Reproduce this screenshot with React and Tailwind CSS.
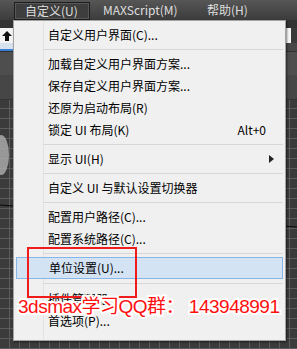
import React from 'react';

const FONT = { fontFamily: '"Noto Sans CJK SC", "Noto Sans", sans-serif' };

const menuRows = [
  { label: '自定义用户界面(C)...' },
  { sep: true },
  { label: '加载自定义用户界面方案...' },
  { label: '保存自定义用户界面方案...' },
  { label: '还原为启动布局(R)' },
  { label: '锁定 UI 布局(K)', shortcut: 'Alt+0' },
  { sep: true },
  { label: '显示 UI(H)', submenu: true },
  { sep: true },
  { label: '自定义 UI 与默认设置切换器' },
  { sep: true },
  { label: '配置用户路径(C)...' },
  { label: '配置系统路径(C)...' },
  { sep: true },
  { label: '单位设置(U)...', active: true },
  { sep: true, tall: true },
  { label: '插件管理器' },
  { label: '首选项(P)...' },
];

const MenuBar = () => (
  <div className="flex h-[20px] items-start bg-linear-to-b from-[#565656] to-[#3c3c3c] text-[12px] text-[#dedede]">
    <div className="ml-[14px] mt-[2px] flex h-[18px] w-[76px] items-center border border-[#1e1e1e] bg-[#3e3e3e] pl-[10px] shadow-[inset_0_0_0_1px_#585858]">
      自定义(U)
    </div>
    <div className="ml-[13px] flex h-[20px] w-[104px] items-center">MAXScript(M)</div>
    <div className="flex h-[20px] items-center">帮助(H)</div>
  </div>
);

const Viewport = () => (
  <div className="flex flex-col">
    <div className="h-[8px] bg-[#333333]" />
    <div className="flex h-[15px] bg-[#3a3a3a]">
      <div className="flex w-[13px] items-center justify-center bg-[#f4f4f4]">
        <svg width="10" height="10" viewBox="0 0 10 10">
          <polygon points="5,0 10,5 7,5 7,10 3,10 3,5 0,5" fill="#111" />
        </svg>
      </div>
      <div className="flex-1" />
      <div className="mr-[6px] w-[6px] bg-[#f6f6f6]" />
    </div>
    <div className="flex h-[6px] bg-[#474747]">
      <div className="w-[13px] bg-[#d8e2ee]" />
    </div>
    <div className="flex h-[2px] bg-[#474747]">
      <div className="w-[13px] bg-[#3d7fd6]" />
    </div>
    <div className="flex h-[24px] flex-col bg-[#4e4e4e]">
      <div className="h-px bg-[#2e2e2e]" />
    </div>
    <div className="flex h-[25px] flex-col justify-end bg-[#464646]">
      <div className="h-px bg-[#343434]" />
    </div>
    <div className="relative h-[249px] bg-[#3b3b3b] bg-[linear-gradient(#5c5c5c_1px,transparent_1px),linear-gradient(90deg,#5c5c5c_1px,transparent_1px)] bg-[size:10px_10px] bg-[position:-1px_-2px]">
      <svg className="absolute inset-0" width="297" height="249" viewBox="0 0 297 249">
        <ellipse cx="1" cy="55" rx="8" ry="20" fill="#a9a9a9" opacity="0.85" />
        <line x1="0" y1="105" x2="297" y2="127" stroke="#0a0a0a" strokeWidth="1.2" />
      </svg>
    </div>
  </div>
);

const DropMenu = () => (
  <div className="absolute left-[13px] top-[20px] h-[321px] w-[273px] border border-[#a3a3a3] bg-[#f0f0f0] pt-[3px] text-[12px] text-black shadow-[1px_1px_2px_rgba(0,0,0,0.5)]">
    <div className="absolute bottom-0 left-[29px] top-0 w-px bg-[#e2e2e2]" />
    <div className="relative flex flex-col">
      {menuRows.map((row, i) =>
        row.sep ? (
          <div
            key={i}
            className={`ml-[29px] mr-[2px] flex items-center ${row.tall ? 'h-[9px]' : 'h-[7px]'}`}
          >
            <div className="h-px w-full bg-[#d7d7d7]" />
          </div>
        ) : (
          <div
            key={i}
            className={`mx-[2px] flex h-[22px] items-center pl-[32px] pr-[17px] ${
              row.active ? 'border border-[#86b5e6] bg-[#d3e3f4] pl-[31px]' : ''
            }`}
          >
            <span className="flex-1 leading-none">{row.label}</span>
            {row.shortcut && <span className="leading-none">{row.shortcut}</span>}
            {row.submenu && (
              <svg width="5" height="8" viewBox="0 0 5 8" className="mr-[-8px]">
                <polygon points="0,0 5,4 0,8" fill="#222" />
              </svg>
            )}
          </div>
        )
      )}
    </div>
  </div>
);

export default function App() {
  return (
    <div className="relative h-[349px] w-[297px] overflow-hidden bg-[#3b3b3b]" style={FONT}>
      <MenuBar />
      <Viewport />
      <DropMenu />
      {/* red annotation box */}
      <div className="absolute left-[27px] top-[247px] h-[51px] w-[110px] border-2 border-[#f01c1c]" />
      {/* watermark */}
      <div
        className="absolute left-[18px] top-[297px] whitespace-nowrap text-[19px] leading-none tracking-[-0.5px] text-[#ff1010] [-webkit-text-stroke:4px_#ffffff] [paint-order:stroke_fill]"
        style={{ fontFamily: '"Liberation Sans", "Noto Sans CJK SC", sans-serif' }}
      >
        3dsmax学习QQ群： 143948991
      </div>
    </div>
  );
}
